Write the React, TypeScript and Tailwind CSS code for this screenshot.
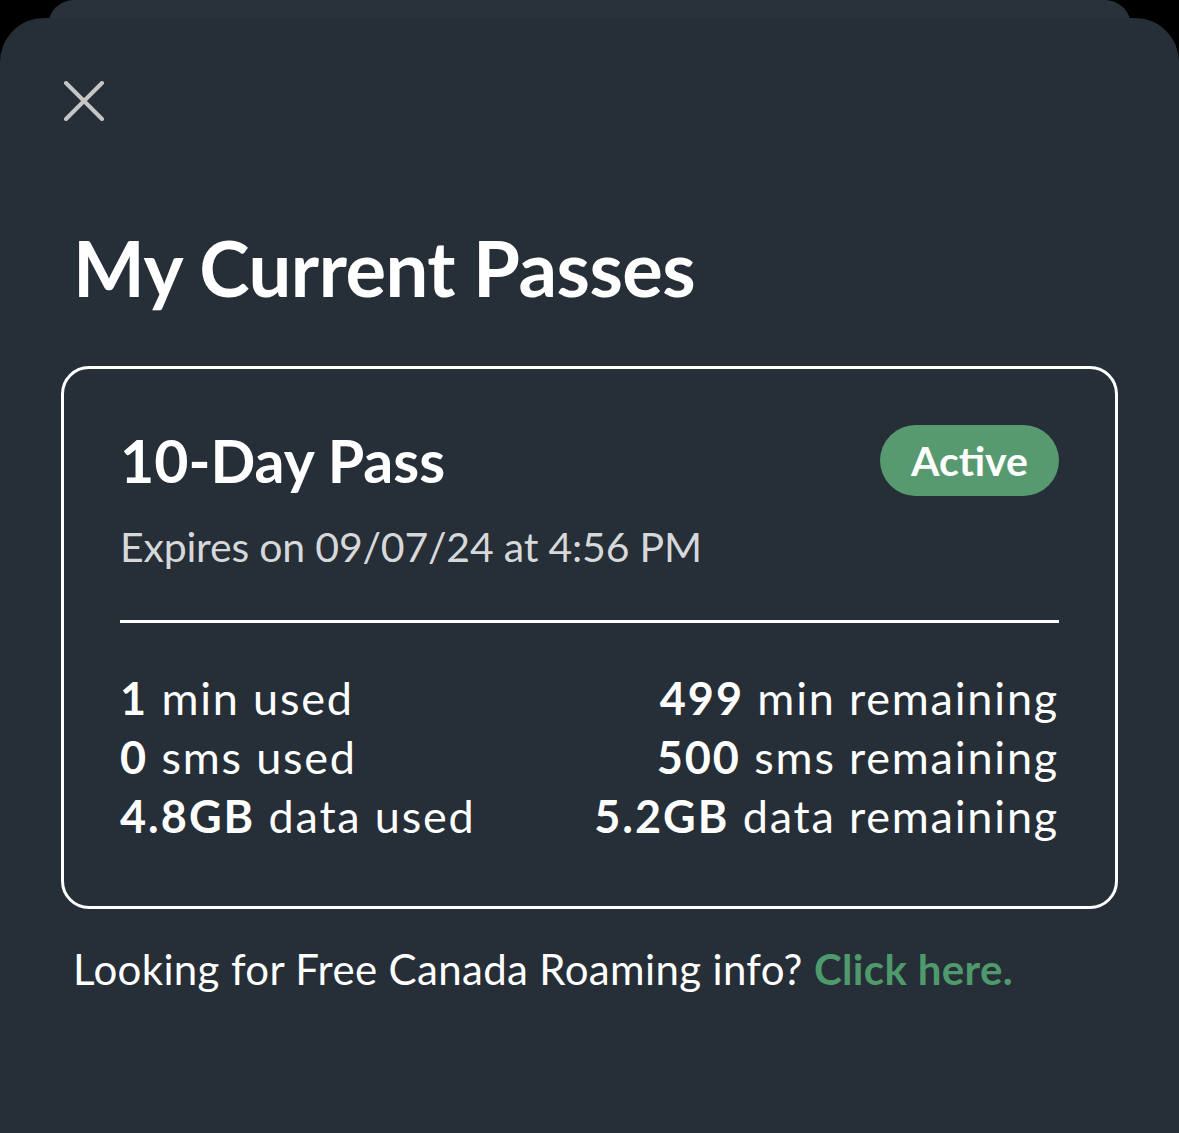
import React from 'react'

const font = { fontFamily: 'Lato, "Open Sans", sans-serif' }

const Stat = ({ value, label, right }: { value: string; label: string; right?: boolean }) => (
    <p className={`text-[45px] leading-[59px] text-white tracking-[1.8px] ${right ? 'text-right' : ''}`}>
        <span className="font-bold tracking-[2px]">{value}</span> {label}
    </p>
)

const App = () => {
    return (
        <div className="w-[1179px] h-[1133px] bg-black overflow-hidden" style={font}>
            <div className="mx-[48px] h-[40px] -mb-[22px] rounded-t-[26px] bg-[#29313a]"></div>
            <div className="h-[1200px] rounded-t-[44px] bg-[#262e37]">
                <div className="pt-[63px] pl-[64px]">
                    <svg width="40" height="40" viewBox="0 0 40 40" fill="none">
                        <path d="M2 2 L38 38 M38 2 L2 38" stroke="#c6c6c6" strokeWidth="4" strokeLinecap="round" />
                    </svg>
                </div>
                <h1 className="mt-[109px] ml-[73px] text-[76px] leading-none font-bold text-white tracking-[-0.5px]">
                    My Current Passes
                </h1>
                <div className="mx-[61px] mt-[60px] border-[3px] border-white rounded-[28px] px-[56px] pt-[56px] pb-[60px]">
                    <div className="flex items-center justify-between">
                        <h2 className="text-[59px] leading-none font-bold text-white">10-Day Pass</h2>
                        <span className="h-[71px] px-[31px] rounded-full bg-[#579a6f] text-white text-[41px] font-bold flex items-center">
                            Active
                        </span>
                    </div>
                    <p className="mt-[20px] text-[41px] tracking-[-0.2px] text-[#d6d8da]">Expires on 09/07/24 at 4:56 PM</p>
                    <div className="mt-[42px] h-[3px] bg-white"></div>
                    <div className="mt-[46px] flex justify-between">
                        <div>
                            <Stat value="1" label="min used" />
                            <Stat value="0" label="sms used" />
                            <Stat value="4.8GB" label="data used" />
                        </div>
                        <div>
                            <Stat value="499" label="min remaining" right />
                            <Stat value="500" label="sms remaining" right />
                            <Stat value="5.2GB" label="data remaining" right />
                        </div>
                    </div>
                </div>
                <p className="mt-[29px] ml-[73px] text-[42px] tracking-[0.35px] text-white">
                    Looking for Free Canada Roaming info? <span className="font-bold text-[#4f9a6c]">Click here.</span>
                </p>
            </div>
        </div>
    )
}

export default App
